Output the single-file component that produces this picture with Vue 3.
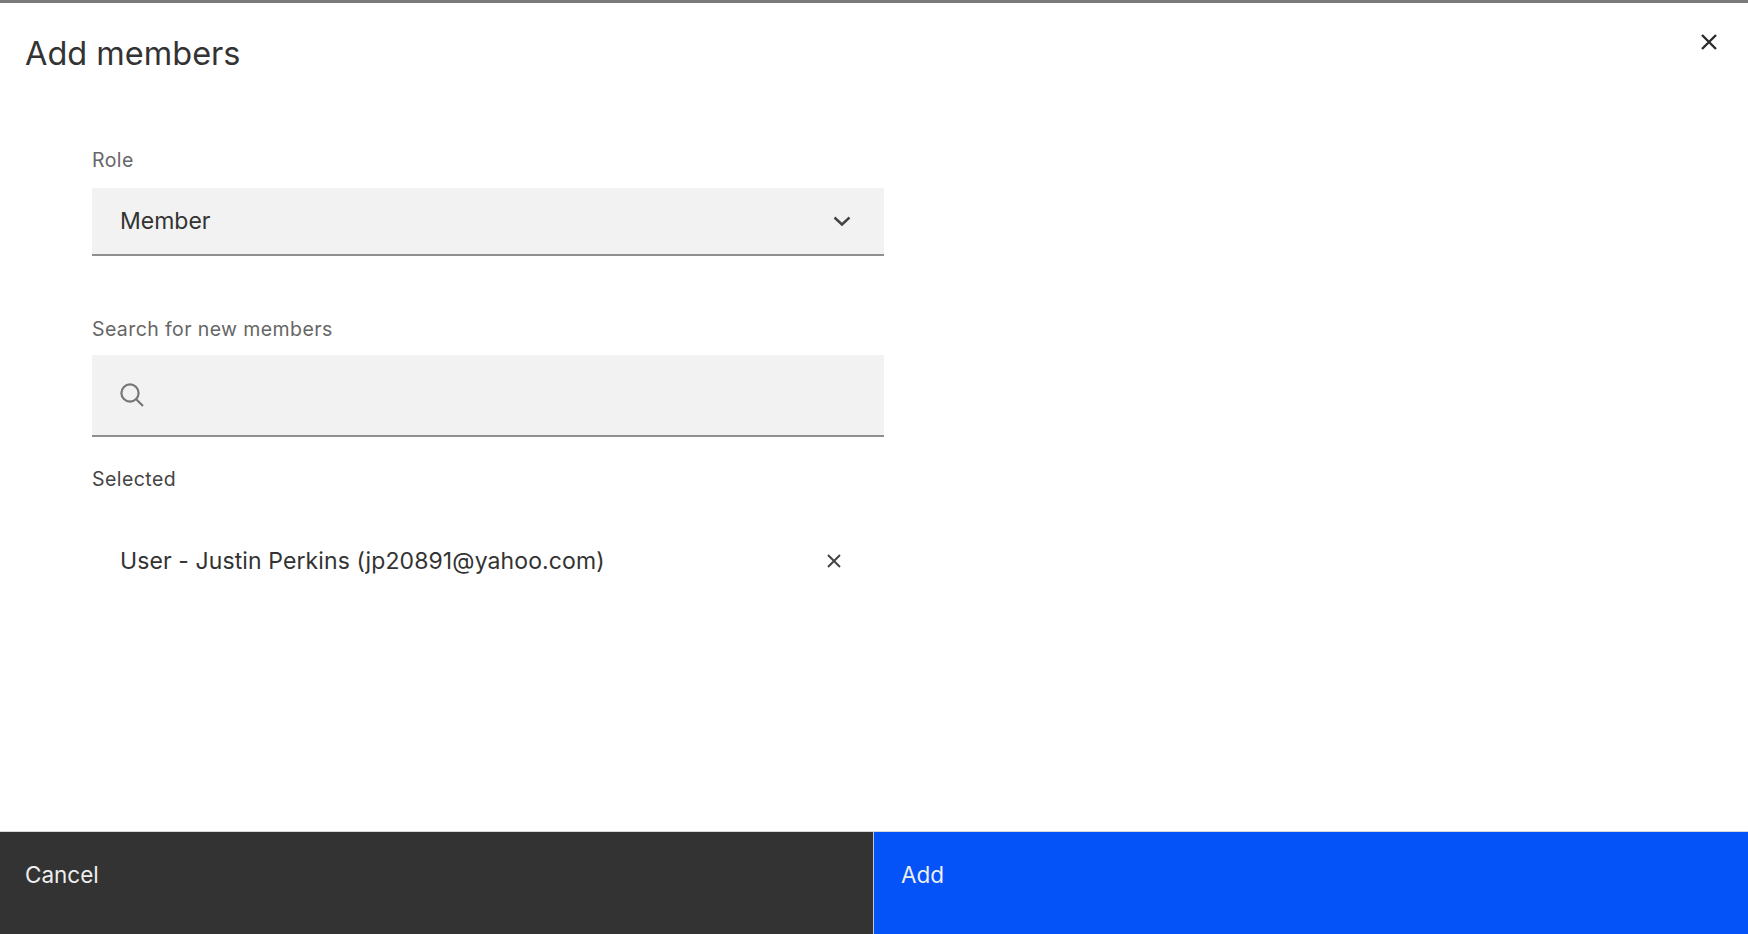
<script setup>
const memberLabel = 'User - Justin Perkins (jp20891@yahoo.com)'
</script>

<template>
  <div class="modal">
    <header class="head">
      <h1 class="title">Add members</h1>
      <button class="close" aria-label="Close">
        <svg width="22" height="22" viewBox="0 0 22 22"><path d="M4 4 18 18M18 4 4 18" /></svg>
      </button>
    </header>
    <main class="body">
      <label class="label role-label">Role</label>
      <div class="field select">
        <span class="value">Member</span>
        <svg class="chev" width="22" height="12" viewBox="0 0 22 12"><path d="M3.5 2.5 11 9.5 18.5 2.5" /></svg>
      </div>
      <label class="label search-label">Search for new members</label>
      <div class="field search">
        <svg class="mag" width="28" height="28" viewBox="0 0 28 28"><circle cx="12" cy="12" r="8.6" /><path d="M18.2 18.2 25 25" /></svg>
      </div>
      <div class="selected">Selected</div>
      <div class="row">
        <span class="member">{{ memberLabel }}</span>
        <svg class="rm" width="18" height="18" viewBox="0 0 18 18"><path d="M3 3 15 15M15 3 3 15" /></svg>
      </div>
    </main>
    <footer class="foot">
      <button class="btn cancel">Cancel</button>
      <button class="btn add">Add</button>
    </footer>
  </div>
</template>

<style>
html, body { margin: 0; background: #fff; }
</style>

<style scoped>
.modal {
  width: 1748px;
  height: 934px;
  display: flex;
  flex-direction: column;
  box-sizing: border-box;
  border-top: 3px solid #7a7a7a;
  background: #fff;
  color: #2b2b2b;
  font-family: Inter, "Liberation Sans", sans-serif;
  overflow: hidden;
}
.head {
  display: flex;
  justify-content: space-between;
  align-items: flex-start;
  padding: 0 28px 0 25px;
  height: 97px;
  flex: none;
}
.title {
  margin: 32px 0 0;
  font-size: 32.5px;
  line-height: 38px;
  font-weight: 400;
  color: #333;
}
.close {
  margin-top: 28px;
  padding: 0;
  border: 0;
  background: none;
  width: 22px;
  height: 22px;
}
.close path { stroke: #2a2a2a; stroke-width: 2.4; fill: none; }
.body {
  flex: 1;
  padding: 48px 0 0 92px;
  width: 792px;
}
.label {
  display: block;
  font-size: 19.5px;
  line-height: 24px;
  letter-spacing: 0.4px;
  color: #666;
}
.field {
  width: 792px;
  box-sizing: border-box;
  background: #f2f2f2;
  border-bottom: 2px solid #8f8f8f;
  display: flex;
  align-items: center;
}
.select {
  height: 68px;
  margin-top: 16px;
  padding: 0 31px 0 28px;
  justify-content: space-between;
}
.value { font-size: 23px; color: #333; }
.chev path { stroke: #444; stroke-width: 2.4; fill: none; }
.search-label { margin-top: 61px; }
.search {
  height: 82px;
  margin-top: 14px;
  padding-left: 26px;
}
.mag circle, .mag path { stroke: #777; stroke-width: 2.2; fill: none; }
.selected {
  margin-top: 30px;
  font-size: 19.5px;
  line-height: 24px;
  letter-spacing: 0.45px;
  color: #444;
}
.row {
  display: flex;
  align-items: center;
  justify-content: space-between;
  margin-top: 46px;
  padding: 0 41px 0 28px;
  height: 48px;
}
.member { font-size: 23px; letter-spacing: 0.1px; color: #333; }
.rm path { stroke: #444; stroke-width: 2; fill: none; }
.foot {
  flex: none;
  height: 103px;
  display: flex;
  border-top: 1px solid #d8d8d8;
  box-sizing: border-box;
}
.btn {
  border: 0;
  padding: 28px 0 0 0;
  height: 100%;
  text-align: left;
  align-self: stretch;
  display: flex;
  align-items: flex-start;
  font-family: inherit;
  font-size: 22.5px;
  line-height: 30px;
  color: #eee;
}
.cancel {
  width: 874px;
  background: #333333;
  padding-left: 25px;
  border-right: 1px solid #c8c8c8;
  box-sizing: border-box;
}
.add {
  flex: 1;
  background: #0353f9;
  padding-left: 27px;
}
</style>
